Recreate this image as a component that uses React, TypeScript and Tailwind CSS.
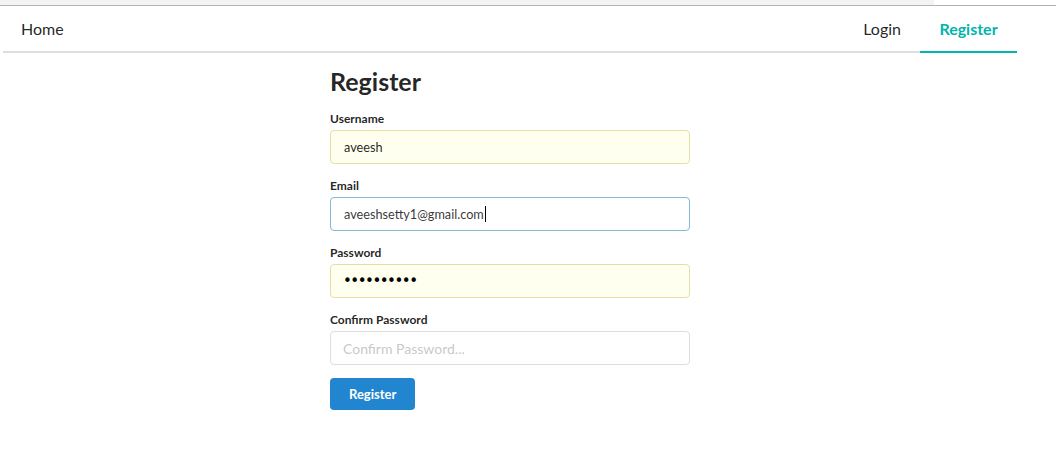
import React from "react";

const font = { fontFamily: "Lato, 'Helvetica Neue', Arial, sans-serif" };

function Label({ children }: { children: React.ReactNode }) {
  return (
    <label className="mb-[4px] block text-[12px] font-bold leading-[15px] text-[rgba(0,0,0,0.87)]">
      {children}
    </label>
  );
}

export default function App() {
  return (
    <div className="min-h-[474px] bg-white" style={font}>
      {/* browser chrome strip */}
      <div className="h-[6px] border-b border-[#b3b3b3]">
        <div className="h-[5px] w-[934px] bg-[#f3f3f3]" />
      </div>

      <div className="ml-[3px] w-[1014px]">
        <nav className="flex border-b-2 border-[#dedede] text-[16px] text-[rgba(0,0,0,0.87)]">
          <a className="px-[18px] py-[14.7px] leading-[16px]">Home</a>
          <div className="ml-auto flex">
            <a className="px-[19px] py-[14.7px] leading-[16px]">Login</a>
            <a className="-mb-[2px] w-[97px] border-b-2 border-[#00b5ad] py-[14.7px] text-center font-bold leading-[16px] text-[#00b5ad]">
              Register
            </a>
          </div>
        </nav>

        <div className="mx-auto mt-[13px] w-[360px]">
          <h2 className="mb-[14px] text-[25px] font-bold leading-[31px] text-[rgba(0,0,0,0.87)]">
            Register
          </h2>

          <form className="flex flex-col" onSubmit={(e) => e.preventDefault()}>
            <div className="mb-[14px]">
              <Label>Username</Label>
              <div className="flex h-[34px] items-center rounded-[4px] border border-[#e5dfa1] bg-[#fffff0] px-[13px] text-[12.7px] text-[rgba(0,0,0,0.87)]">
                aveesh
              </div>
            </div>

            <div className="mb-[14px]">
              <Label>Email</Label>
              <div className="flex h-[34px] items-center rounded-[4px] border border-[#85b7d9] bg-white px-[13px] text-[12.7px] text-[rgba(0,0,0,0.8)]">
                aveeshsetty1@gmail.com
                <span className="ml-[1px] inline-block h-[16px] w-px bg-black" />
              </div>
            </div>

            <div className="mb-[14px]">
              <Label>Password</Label>
              <div className="flex h-[34px] items-center rounded-[4px] border border-[#e5dfa1] bg-[#fffff0] px-[12px] text-black">
                <span
                  className="text-[15px] leading-none tracking-[-1.5px]"
                  style={{ fontFamily: "'DejaVu Sans', sans-serif" }}
                >
                  ••••••••••
                </span>
              </div>
            </div>

            <div className="mb-[13px]">
              <Label>Confirm Password</Label>
              <input
                type="password"
                placeholder="Confirm Password..."
                className="block h-[34px] w-full rounded-[4px] border border-[#dedede] px-[12px] text-[14px] outline-none placeholder:text-[rgba(191,191,191,0.87)]"
                style={font}
              />
            </div>

            <div>
              <button
                type="submit"
                className="h-[32px] rounded-[4px] bg-[#2185d0] px-[19px] text-[13px] font-bold leading-[13px] text-white"
                style={font}
              >
                Register
              </button>
            </div>
          </form>
        </div>
      </div>
    </div>
  );
}
